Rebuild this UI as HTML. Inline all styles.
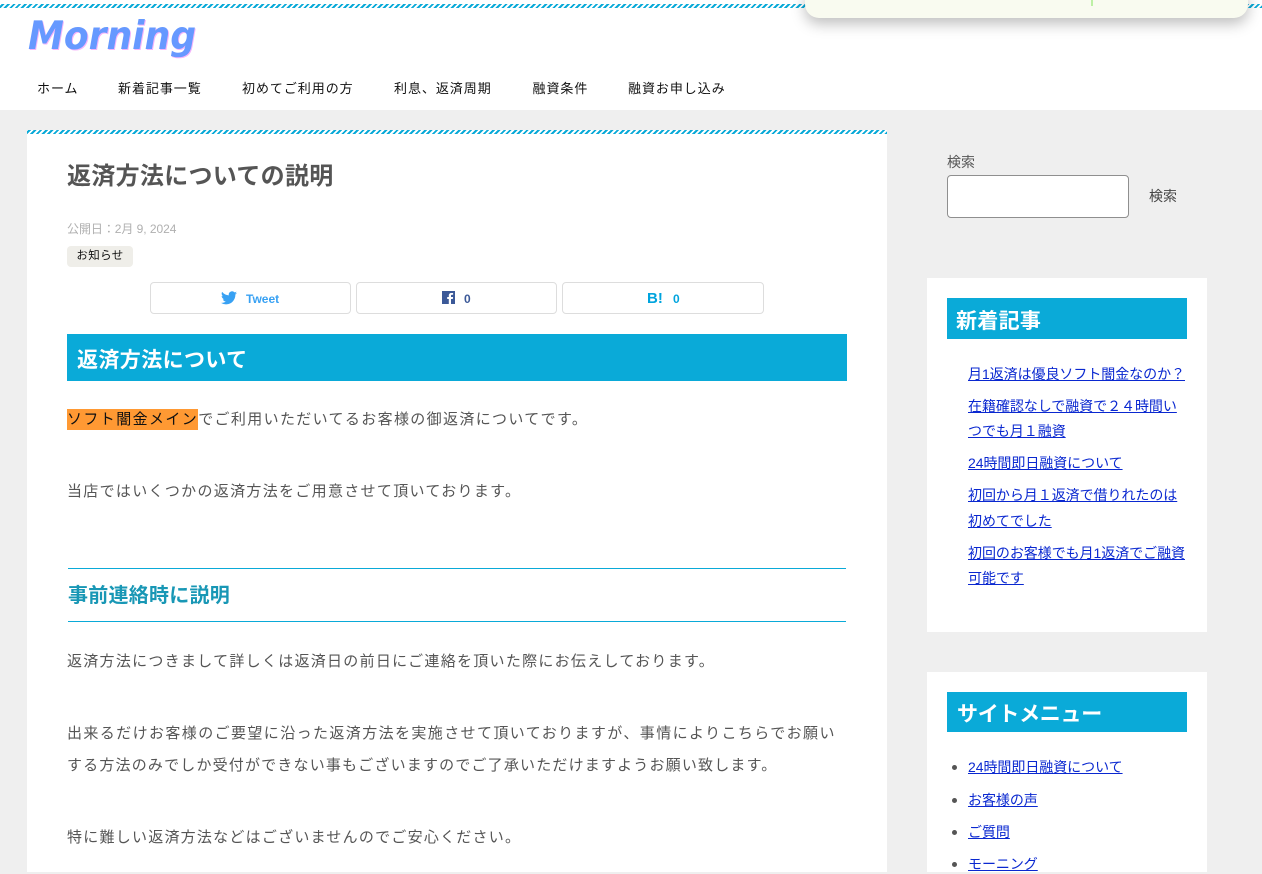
<!DOCTYPE html>
<html lang="ja"><head><meta charset="utf-8"><title>返済方法についての説明</title>
<style>
*{box-sizing:border-box}
html,body{margin:0;padding:0}
body{width:1262px;height:872px;overflow:hidden;position:relative;background:#efefef;font-family:"Liberation Sans","Noto Sans CJK JP",sans-serif;color:#555}
.a{position:absolute;white-space:nowrap}
.st{position:absolute;height:4px;background:repeating-linear-gradient(-45deg,#0aaad8 0,#0aaad8 2px,#fff 2px,#fff 4px)}
.nav{top:80px;font-size:13px;line-height:18px;color:#111;letter-spacing:.95px}
.p{left:67px;font-size:15px;line-height:24px;letter-spacing:1.38px;color:#555}
.w{position:absolute;background:#fff}
.bar{position:absolute;background:#0aaad8;color:#fff;font-weight:bold}
.l{font-size:14px;line-height:20px;left:968px;color:#0a28d0;text-decoration:underline;letter-spacing:-.05px}
.sh{position:absolute;top:282px;height:32px;border:1px solid #ddd;border-radius:4px;background:#fff}
.d{position:absolute;left:952px;width:5px;height:5px;border-radius:50%;background:#555}
</style></head><body>
<div class="w" style="left:0;top:0;width:1262px;height:110px"></div>
<div class="st" style="left:0;top:4px;width:1262px"></div>
<div class="a" style="left:805px;top:-10px;width:443px;height:28px;background:#f9fbf0;border-radius:0 0 14px 14px;box-shadow:0 6px 14px rgba(0,0,0,.25)"></div>
<div class="a" style="left:1091px;top:0;width:2px;height:6px;background:#bdf0a5"></div>
<div class="a" style="left:28px;top:13px;font:italic bold 39px/48px 'DejaVu Sans',sans-serif;color:#6699ff;text-shadow:1px 1px 0 #f5b5fa;transform:scaleX(.925);transform-origin:0 0">Morning</div>
<div class="a nav" style="left:37px">ホーム</div>
<div class="a nav" style="left:118px">新着記事一覧</div>
<div class="a nav" style="left:242px">初めてご利用の方</div>
<div class="a nav" style="left:394px">利息、返済周期</div>
<div class="a nav" style="left:532.500px">融資条件</div>
<div class="a nav" style="left:628px">融資お申し込み</div>

<div class="w" style="left:27px;top:130px;width:860px;height:742px"></div>
<div class="st" style="left:27px;top:130px;width:860px"></div>
<div class="a" style="left:67px;top:160px;font-size:24px;line-height:34px;letter-spacing:.3px;font-weight:bold;color:#555">返済方法についての説明</div>
<div class="a" style="left:67px;top:221px;font-size:12px;line-height:16px;letter-spacing:-.05px;color:#b0b0b0">公開日：2月 9, 2024</div>
<div class="a" style="left:67px;top:246px;width:66px;height:21px;background:#efeee9;border-radius:4px;font-size:11.5px;line-height:20px;text-align:center;color:#111;letter-spacing:.4px">お知らせ</div>

<div class="sh" style="left:150px;width:201px"></div>
<svg class="a" style="left:221px;top:291px" width="16" height="14" viewBox="0 0 24 20"><path fill="#38a1f3" d="M24 2.4a9.8 9.8 0 0 1-2.8.8A5 5 0 0 0 23.300.4a9.800 9.800 0 0 1-3.100 1.200 4.900 4.900 0 0 0-8.400 4.500A14 14 0 0 1 1.700.9a4.900 4.900 0 0 0 1.500 6.600 4.900 4.900 0 0 1-2.200-.6c0 2.400 1.700 4.400 3.900 4.900a4.900 4.900 0 0 1-2.200.1 4.900 4.900 0 0 0 4.600 3.400A9.900 9.900 0 0 1 0 17.300 14 14 0 0 0 7.500 19.500c9.100 0 14.300-7.700 14-14.600A10 10 0 0 0 24 2.400z"/></svg>
<div class="a" style="left:246px;top:291px;font-size:12px;line-height:16px;font-weight:bold;color:#38a1f3">Tweet</div>
<div class="sh" style="left:356px;width:201px"></div>
<svg class="a" style="left:442px;top:291px" width="13" height="13" viewBox="0 0 13 13"><rect width="13" height="13" fill="#3b5998"/><path fill="#fff" d="M9 13V8h1.800l.3-2H9V4.800c0-.6.2-1 1-1h1.100V2h-1.600C7.800 2 6.800 3 6.800 4.600V6H5.200v2h1.600v5z"/></svg>
<div class="a" style="left:464px;top:291px;font-size:12px;line-height:16px;font-weight:bold;color:#3b5998">0</div>
<div class="sh" style="left:562px;width:202px"></div>
<div class="a" style="left:647px;top:290px;font-size:15px;line-height:18px;font-weight:bold;color:#00a4de">B!</div>
<div class="a" style="left:673px;top:291px;font-size:12px;line-height:16px;font-weight:bold;color:#00a4de">0</div>

<div class="bar" style="left:67px;top:334px;width:780px;height:47px;font-size:21px;letter-spacing:.4px;line-height:54px;padding-left:10px">返済方法について</div>
<div class="a p" style="top:408px;letter-spacing:1.35px"><span style="background:#ff9933;color:#111;display:inline-block;height:21px;line-height:21px;vertical-align:top;margin-top:1px;letter-spacing:1.4px">ソフト闇金メイン</span>でご利用いただいてるお客様の御返済についてです。</div>
<div class="a p" style="top:480px;letter-spacing:1.31px">当店ではいくつかの返済方法をご用意させて頂いております。</div>
<div class="a" style="left:68px;top:568px;width:778px;height:54px;border-top:1px solid #0aaad8;border-bottom:1px solid #0aaad8;font-size:20px;letter-spacing:.25px;line-height:55px;font-weight:bold;color:#1897b5">事前連絡時に説明</div>
<div class="a p" style="top:650px;letter-spacing:1.28px">返済方法につきまして詳しくは返済日の前日にご連絡を頂いた際にお伝えしております。</div>
<div class="a p" style="top:722px;letter-spacing:1.4px">出来るだけお客様のご要望に沿った返済方法を実施させて頂いておりますが、事情によりこちらでお願い</div>
<div class="a p" style="top:754px;letter-spacing:1.18px">する方法のみでしか受付ができない事もございますのでご了承いただけますようお願い致します。</div>
<div class="a p" style="top:826px;letter-spacing:1.24px">特に難しい返済方法などはございませんのでご安心ください。</div>

<div class="a" style="left:947px;top:153px;font-size:14px;line-height:18px;color:#555">検索</div>
<div class="a" style="left:947px;top:175px;width:182px;height:43px;background:#fff;border:1px solid #8f8f8f;border-radius:4px"></div>
<div class="a" style="left:1149px;top:187px;font-size:14px;line-height:18px;color:#444">検索</div>

<div class="w" style="left:927px;top:278px;width:280px;height:354px"></div>
<div class="bar" style="left:947px;top:298px;width:240px;height:41px;font-size:21px;letter-spacing:.3px;line-height:47px;padding-left:9px">新着記事</div>
<div class="a l" style="top:364px">月1返済は優良ソフト闇金なのか？</div>
<div class="a l" style="top:396px">在籍確認なしで融資で２４時間い</div>
<div class="a l" style="top:421px">つでも月１融資</div>
<div class="a l" style="top:453px">24時間即日融資について</div>
<div class="a l" style="top:485px">初回から月１返済で借りれたのは</div>
<div class="a l" style="top:511px">初めてでした</div>
<div class="a l" style="top:543px">初回のお客様でも月1返済でご融資</div>
<div class="a l" style="top:568px">可能です</div>

<div class="w" style="left:927px;top:672px;width:280px;height:200px"></div>
<div class="bar" style="left:947px;top:692px;width:240px;height:40px;font-size:21px;letter-spacing:-.3px;line-height:46px;padding-left:10px">サイトメニュー</div>
<div class="d" style="left:952px;top:765px"></div><div class="a l" style="top:757px">24時間即日融資について</div>
<div class="d" style="left:952px;top:798px"></div><div class="a l" style="top:790px">お客様の声</div>
<div class="d" style="left:952px;top:830px"></div><div class="a l" style="top:822px">ご質問</div>
<div class="d" style="left:952px;top:862px"></div><div class="a l" style="top:854px">モーニング</div>
</body></html>
